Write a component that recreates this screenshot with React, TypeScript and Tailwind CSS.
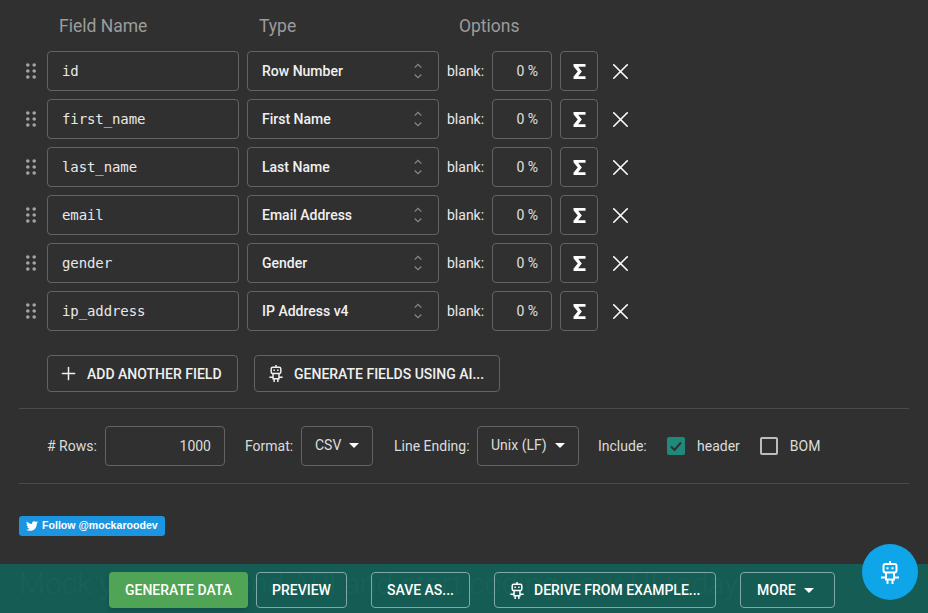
import { FaTwitter } from "react-icons/fa";
import { Plus, X } from "lucide-react";

const fields = [
  { name: "id", type: "Row Number" },
  { name: "first_name", type: "First Name" },
  { name: "last_name", type: "Last Name" },
  { name: "email", type: "Email Address" },
  { name: "gender", type: "Gender" },
  { name: "ip_address", type: "IP Address v4" },
];

function Robot({ className }: { className?: string }) {
  return (
    <svg viewBox="0 0 18 23" fill="none" stroke="currentColor" strokeWidth="2" className={className}>
      <path d="M9 0v3" />
      <rect x="2.5" y="3" width="13" height="8.5" rx="2" />
      <path d="M6.5 6.2v2M11.5 6.2v2" />
      <path d="M5 11.5v7h8v-7M0 16.5h5M13 16.5h5M6.5 18v5M11.5 18v5" />
    </svg>
  );
}

function Grip() {
  return (
    <svg viewBox="0 0 10 16" className="h-4 w-2.5 fill-[#a3a3a3]">
      <circle cx="1.8" cy="2" r="1.8" />
      <circle cx="8.2" cy="2" r="1.8" />
      <circle cx="1.8" cy="8" r="1.8" />
      <circle cx="8.2" cy="8" r="1.8" />
      <circle cx="1.8" cy="14" r="1.8" />
      <circle cx="8.2" cy="14" r="1.8" />
    </svg>
  );
}

function Caret() {
  return <span className="h-0 w-0 border-x-[5px] border-t-[5px] border-x-transparent border-t-white" />;
}

function Row({ name, type }: { name: string; type: string }) {
  return (
    <div className="flex h-10 items-center">
      <div className="flex w-[47px] justify-end pr-[11px]">
        <Grip />
      </div>
      <div className="flex h-10 w-[192px] items-center rounded border border-[#636363] pl-[14px] font-['DejaVu_Sans_Mono',monospace] text-sm tracking-[-0.1px] text-[#e8e8e8]">
        {name}
      </div>
      <div className="ml-2 flex h-10 w-[192px] items-center justify-between rounded border border-[#636363] pl-[14px] pr-4 text-sm font-medium text-[#f0f0f0]">
        {type}
        <svg viewBox="0 0 8 16" fill="none" stroke="#858585" strokeWidth="1.2" className="h-4 w-2">
          <path d="M.7 4.5 4 1.3l3.3 3.2M.7 11.5 4 14.7l3.3-3.2" />
        </svg>
      </div>
      <span className="ml-2 w-[45px] text-sm text-[#e8e8e8]">blank:</span>
      <div className="flex h-10 w-[60px] items-center justify-end rounded border border-[#636363] pr-[13px] text-sm text-[#e0e0e0]">
        0 %
      </div>
      <div className="ml-2 flex h-10 w-[38px] items-center justify-center rounded border border-[#636363]">
        <svg viewBox="0 0 13 15" className="h-[15px] w-[13px] fill-white">
          <path d="M.5 0h12v2.8H5.2L8.8 7.5 5.2 12.2h7.3V15H.5v-2.2L4.7 7.5.5 2.2z" />
        </svg>
      </div>
      <X className="ml-[9px] size-[27px] text-white" strokeWidth={1.4} />
    </div>
  );
}

export default function App() {
  return (
    <div className="relative flex h-[613px] w-[928px] flex-col overflow-hidden bg-[#303030] font-['Roboto',sans-serif]">
      <div className="flex h-[51px] items-start pl-[59px] pt-[15px] text-[17.5px] leading-[22px] text-[#9c9c9c]">
        <span className="w-[200px]">Field Name</span>
        <span className="w-[200px]">Type</span>
        <span>Options</span>
      </div>

      <div className="flex flex-col gap-2">
        {fields.map((f) => (
          <Row key={f.name} name={f.name} type={f.type} />
        ))}
      </div>

      <div className="ml-[47px] mt-6 flex gap-4 text-sm font-medium text-[#f0f0f0]">
        <button className="flex h-[37px] w-[191px] items-center rounded border border-[#636363] pl-2.5">
          <Plus className="mr-2 size-[21px]" strokeWidth={1.7} />
          ADD ANOTHER FIELD
        </button>
        <button className="flex h-[37px] w-[246px] items-center rounded border border-[#636363] pl-[14px]">
          <Robot className="mr-[11px] h-[17px] w-[14px]" />
          GENERATE FIELDS USING AI...
        </button>
      </div>

      <div className="mx-[19px] mt-4 flex h-[76px] items-center border-y border-[#4b4b4b] pl-[28px] text-sm text-[#dcdcdc]">
        <span className="w-[58px]"># Rows:</span>
        <div className="flex h-10 w-[120px] items-center justify-end rounded border border-[#636363] pr-[13px]">1000</div>
        <span className="ml-5 w-[56px]">Format:</span>
        <div className="flex h-10 w-[72px] items-center gap-[8px] rounded border border-[#636363] pb-0.5 pl-[13px]">
          CSV <Caret />
        </div>
        <span className="ml-[21px] w-[83px]">Line Ending:</span>
        <div className="flex h-10 w-[102px] items-center gap-[8px] rounded border border-[#636363] pb-0.5 pl-[13px]">
          Unix (LF) <Caret />
        </div>
        <span className="ml-[19px] w-[69px]">Include:</span>
        <span className="flex size-[18px] items-center justify-center rounded-[2px] bg-[#1f8a7a]">
          <svg viewBox="0 0 18 18" fill="none" stroke="#303030" strokeWidth="2" className="size-[18px]">
            <path d="M4 9.5 7.5 13 14 5.5" />
          </svg>
        </span>
        <span className="ml-3">header</span>
        <span className="ml-5 size-[18px] rounded-[2px] border-2 border-[#bdbdbd]" />
        <span className="ml-3">BOM</span>
      </div>

      <div className="ml-[19px] mt-8 flex h-5 w-[146px] items-center gap-1 rounded-[3px] bg-[#1b95e0] pl-[7px] font-['Liberation_Sans',sans-serif] text-[10.6px] font-bold text-white">
        <FaTwitter className="size-[12px]" />
        Follow @mockaroodev
      </div>

      <div className="relative mt-auto flex h-[49px] items-start gap-2 bg-[#145c54] pt-2 pl-[109px] text-sm font-medium text-white">
        <span className="absolute left-[19px] top-0 whitespace-nowrap text-[30px] font-light leading-10 text-[#186259]">
          Mock your back-end API and start coding your UI today.
        </span>
        <button className="relative h-9 w-[139px] rounded bg-[#50a455] shadow-md">GENERATE DATA</button>
        <button className="relative h-9 w-[91px] rounded border border-[#7fa9a4]">PREVIEW</button>
        <button className="relative ml-4 h-9 w-[99px] rounded border border-[#7fa9a4]">SAVE AS...</button>
        <button className="relative ml-4 flex h-9 w-[222px] items-center rounded border border-[#7fa9a4] pl-[15px]">
          <Robot className="mr-[10px] h-[17px] w-[14px]" />
          DERIVE FROM EXAMPLE...
        </button>
        <button className="relative ml-4 flex h-9 w-[95px] items-center gap-2 rounded border border-[#7fa9a4] pl-4">
          MORE <Caret />
        </button>
      </div>

      <div className="absolute left-[862px] top-[544px] flex size-14 items-center justify-center rounded-full bg-[#0ea5e9]">
        <Robot className="h-[23px] w-[18px] text-white" />
      </div>
    </div>
  );
}
